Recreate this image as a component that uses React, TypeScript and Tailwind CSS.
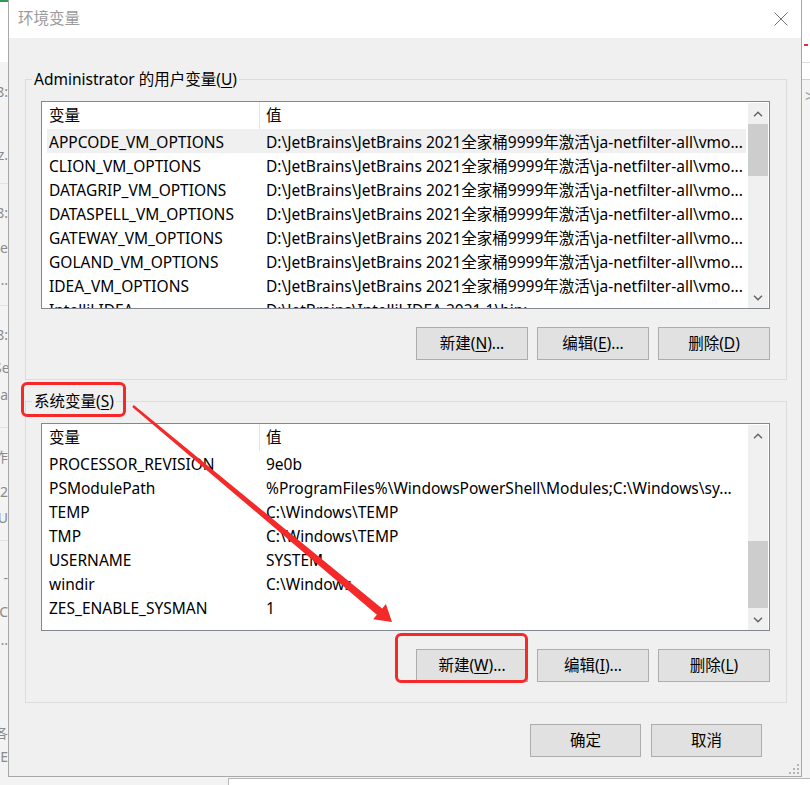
import type { ReactNode } from "react";

type Row = { name: string; value: string; selected?: boolean };

const JB = "D:\\JetBrains\\JetBrains 2021全家桶9999年激活\\ja-netfilter-all\\vmo...";

const userRows: Row[] = [
  { name: "APPCODE_VM_OPTIONS", value: JB, selected: true },
  { name: "CLION_VM_OPTIONS", value: JB },
  { name: "DATAGRIP_VM_OPTIONS", value: JB },
  { name: "DATASPELL_VM_OPTIONS", value: JB },
  { name: "GATEWAY_VM_OPTIONS", value: JB },
  { name: "GOLAND_VM_OPTIONS", value: JB },
  { name: "IDEA_VM_OPTIONS", value: JB },
  { name: "IntelliJ IDEA", value: "D:\\JetBrains\\IntelliJ IDEA 2021.1\\bin;" },
];

const systemRows: Row[] = [
  { name: "PROCESSOR_REVISION", value: "9e0b" },
  { name: "PSModulePath", value: "%ProgramFiles%\\WindowsPowerShell\\Modules;C:\\Windows\\sy..." },
  { name: "TEMP", value: "C:\\Windows\\TEMP" },
  { name: "TMP", value: "C:\\Windows\\TEMP" },
  { name: "USERNAME", value: "SYSTEM" },
  { name: "windir", value: "C:\\Windows" },
  { name: "ZES_ENABLE_SYSMAN", value: "1" },
];

const Chevron = ({ up }: { up?: boolean }) => (
  <svg width="10" height="6" viewBox="0 0 10 6" fill="none">
    <polyline
      points={up ? "1,5.2 5,1.2 9,5.2" : "1,0.8 5,4.8 9,0.8"}
      stroke="#606060"
      strokeWidth="1.4"
    />
  </svg>
);

const Scrollbar = ({ thumb }: { thumb: ReactNode }) => (
  <div className="mt-[1px] mr-[1px] flex w-[20px] shrink-0 flex-col bg-[#f0f0f0]">
    <div className="flex h-[21px] shrink-0 items-center justify-center">
      <Chevron up />
    </div>
    <div className="flex flex-1 flex-col">{thumb}</div>
    <div className="flex h-[21px] shrink-0 items-center justify-center">
      <Chevron />
    </div>
  </div>
);

const VarList = ({ rows, thumb }: { rows: Row[]; thumb: ReactNode }) => (
  <div className="ml-[15px] flex h-[208px] w-[729px] border border-[#828790] bg-white">
    <div className="flex min-w-0 flex-1 flex-col overflow-hidden">
      <div className="flex h-[27px] shrink-0">
        <div className="flex w-[218px] shrink-0 items-center border-r border-[#e5e5e5] pl-[7px]">变量</div>
        <div className="flex items-center pl-[6px]">值</div>
      </div>
      <div className="flex flex-col pl-[5px] pr-[2px]">
        {rows.map((r) => (
          <div
            key={r.name}
            className={`flex h-[24px] shrink-0 items-center whitespace-nowrap pt-[4px] ${r.selected ? "bg-[#f0f0f0]" : ""}`}
          >
            <div className="w-[212px] shrink-0 pl-[2px]">{r.name}</div>
            <div className="overflow-hidden pl-[7px]">{r.value}</div>
          </div>
        ))}
      </div>
    </div>
    <Scrollbar thumb={thumb} />
  </div>
);

const Btn = ({ children, w = "w-[112px]" }: { children: ReactNode; w?: string }) => (
  <button className={`flex h-[33px] ${w} items-center justify-center border border-[#adadad] bg-[#e1e1e1]`}>
    {children}
  </button>
);

const Key = ({ k }: { k: string }) => (
  <>
    (<span className="underline underline-offset-2">{k}</span>)
  </>
);

const Group = ({ label, children, pb }: { label: ReactNode; children: ReactNode; pb: string }) => (
  <fieldset className={`w-[762px] border border-[#dcdcdc] p-0 ${pb}`}>
    <legend className="ml-[6px] h-[20px] px-[2px] leading-[20px]">{label}</legend>
    <div className="pt-[12px]">{children}</div>
  </fieldset>
);

const leftBits: [number, string][] = [
  [92, "8:"], [155, "z."], [213, "8:"], [248, "e"], [280, "…"], [335, "8:"], [368, "Se"],
  [395, "a"], [457, "作"], [492, "2"], [518, "U"], [578, "-"], [612, "C"], [640, "…"],
  [733, "各"], [757, "E"],
];

export default function App() {
  return (
    <div className="relative h-[785px] w-[810px] overflow-hidden bg-[#f3f3f3] font-['Noto_Sans','Noto_Sans_CJK_SC',sans-serif] text-[15.5px] text-black">
      {/* windows behind the dialog */}
      <div className="absolute left-0 top-0 h-[62px] w-[8px] bg-white" />
      <div className="absolute left-0 top-0 h-[2px] w-[8px] bg-[#2e9a52]" />
      <div className="absolute left-0 top-[183px] h-px w-[8px] bg-[#e2e2e2]" />
      <div className="absolute left-0 top-[305px] h-px w-[8px] bg-[#e2e2e2]" />
      <div className="absolute left-0 top-[427px] h-px w-[8px] bg-[#e2e2e2]" />
      <div className="absolute left-0 top-[540px] h-px w-[8px] bg-[#e2e2e2]" />
      <div className="absolute left-0 top-0 h-full w-[8px] overflow-hidden">
        {leftBits.map(([y, t]) => (
          <span
            key={y}
            className="absolute left-[-6px] w-[14px] text-right text-[14px] leading-[18px] text-[#8a8a8a]"
            style={{ top: y - 9 }}
          >
            {t}
          </span>
        ))}
      </div>
      <div className="absolute right-0 top-0 h-[80px] w-[8px] border-b border-[#cfcfcf] bg-white" />
      <div className="absolute right-[2px] top-[44px] h-[2px] w-[4px] bg-[#e03030]" />
      <div className="absolute right-0 top-[62px] h-px w-[8px] bg-[#dedede]" />
      <div className="absolute right-0 top-[86px] h-[20px] w-[8px] overflow-hidden">
        <span className="absolute left-[3px] top-0 text-[16px] leading-[20px] text-[#9a9a9a]">&gt;</span>
      </div>
      <div className="absolute left-[228px] top-[778px] h-[10px] w-[600px] border-l border-t border-[#b5b5b5] bg-white" />

      {/* dialog */}
      <div className="absolute left-[8px] top-0 flex h-[777px] w-[794px] flex-col border-x border-b border-[#a8a8a8] bg-[#f0f0f0]">
        <div className="flex h-[38px] shrink-0 items-center justify-between bg-white pl-[9px] pr-[13px]">
          <span className="text-[#9b9b9b]">环境变量</span>
          <svg width="14" height="14" viewBox="0 0 14 14">
            <path d="M0.5 0.5 L13.5 13.5 M13.5 0.5 L0.5 13.5" stroke="#707070" strokeWidth="1" />
          </svg>
        </div>

        <div className="flex flex-1 flex-col pl-[16px] pt-[31px]">
          <Group
            pb="pb-[19px]"
            label={
              <>
                Administrator 的用户变量<Key k="U" />
              </>
            }
          >
            <VarList rows={userRows} thumb={<div className="h-[52px] bg-[#cdcdcd]" />} />
            <div className="ml-[15px] mt-[18px] flex w-[729px] justify-end gap-[9px]">
              <Btn>
                新建<Key k="N" />...
              </Btn>
              <Btn>
                编辑<Key k="E" />...
              </Btn>
              <Btn>
                删除<Key k="D" />
              </Btn>
            </div>
          </Group>

          <div className="mt-[11px]">
            <Group
              pb="pb-[20px]"
              label={
                <>
                  系统变量<Key k="S" />
                </>
              }
            >
              <VarList rows={systemRows} thumb={<div className="mt-[95px] h-[67px] bg-[#cdcdcd]" />} />
              <div className="ml-[15px] mt-[18px] flex w-[729px] justify-end gap-[9px]">
                <Btn>
                  新建<Key k="W" />...
                </Btn>
                <Btn>
                  编辑<Key k="I" />...
                </Btn>
                <Btn>
                  删除<Key k="L" />
                </Btn>
              </div>
            </Group>
          </div>

          <div className="mt-[21px] flex w-[737px] justify-end gap-[10px]">
            <Btn w="w-[111px]">确定</Btn>
            <Btn w="w-[111px]">取消</Btn>
          </div>
        </div>

        <svg className="absolute bottom-[2px] right-[2px]" width="10" height="10" viewBox="0 0 10 10">
          <g fill="#b4b4b4">
            <rect x="8" y="0" width="2" height="2" />
            <rect x="4" y="4" width="2" height="2" />
            <rect x="8" y="4" width="2" height="2" />
            <rect x="0" y="8" width="2" height="2" />
            <rect x="4" y="8" width="2" height="2" />
            <rect x="8" y="8" width="2" height="2" />
          </g>
        </svg>
      </div>

      {/* red annotations */}
      <div className="pointer-events-none absolute left-[21px] top-[382px] h-[35px] w-[105px] rounded-[6px] border-[3px] border-[#f42a2a]" />
      <div className="pointer-events-none absolute left-[395px] top-[633px] h-[50px] w-[133px] rounded-[6px] border-[3px] border-[#f42a2a]" />
      <svg className="pointer-events-none absolute left-0 top-0" width="810" height="785" viewBox="0 0 810 785">
        <polygon
          points="133.8,405.1 382.1,608.5 385.9,603.9 392,622 373.1,619.3 376.9,614.7 132.2,406.9"
          fill="#f42a2a"
        />
      </svg>
    </div>
  );
}
